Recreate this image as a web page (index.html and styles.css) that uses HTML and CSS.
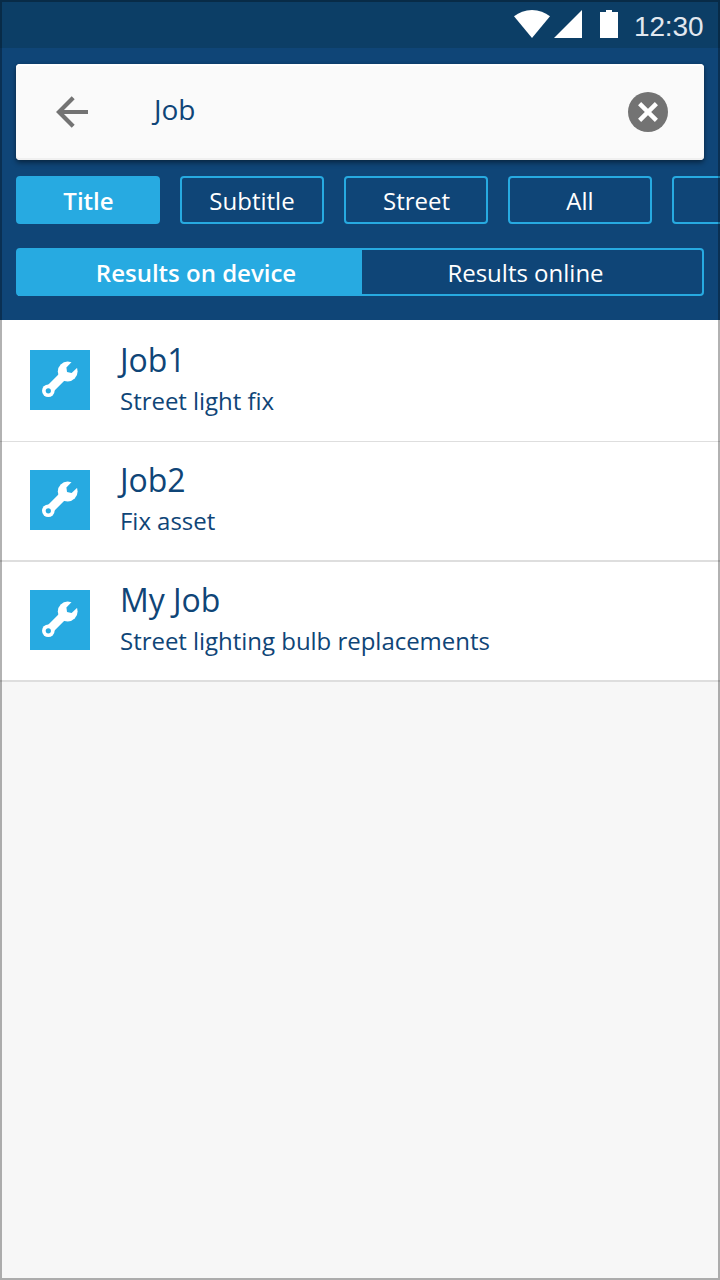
FILE: index.html
```html
<!DOCTYPE html>
<html lang="en">
<head>
<meta charset="utf-8">
<title>Job search</title>
<link rel="stylesheet" href="styles.css">
</head>
<body>
<svg class="defs" aria-hidden="true">
  <symbol id="wrench" viewBox="0 0 60 60">
    <path d="M20.5 38.5L34 25" stroke="#fff" stroke-width="8.6"/>
    <circle cx="37.7" cy="21.5" r="9.9" fill="#fff"/>
    <circle cx="18.3" cy="40.8" r="6.3" fill="#fff"/>
    <circle cx="18.3" cy="40.8" r="2.6" fill="#27aae1"/>
    <path d="M42.6 11L36.4 17.6L37 22L41.6 23L48.8 16.2Z" fill="#27aae1"/>
  </symbol>
</svg>
<div class="screen">
  <header class="header">
    <div class="status">
      <svg class="status-icons" viewBox="0 0 106 28">
        <path d="M0 6.3C5 2.3 11 0 18 0s13 2.3 18 6.3L18 28z"/>
        <path d="M40 28L68 0v28z"/>
        <path d="M86 2h6V0h6v2h6v26H86z"/>
      </svg>
      <span class="clock">12:30</span>
    </div>
    <div class="search">
      <svg class="icon" viewBox="0 0 24 24"><path class="arrow" d="M20 12H6M12.6 4.9L5.5 12l7.1 7.1"/></svg>
      <span class="query">Job</span>
      <svg class="icon" viewBox="0 0 24 24"><circle cx="12" cy="12" r="10"/><path class="cross" d="M7.8 7.8l8.4 8.4M16.2 7.8l-8.4 8.4"/></svg>
    </div>
    <nav class="chips">
      <span class="chip chip-active">Title</span>
      <span class="chip">Subtitle</span>
      <span class="chip chip-street">Street</span>
      <span class="chip">All</span>
      <span class="chip"></span>
    </nav>
    <div class="segments">
      <span class="segment segment-active">Results on device</span>
      <span class="segment">Results online</span>
    </div>
  </header>
  <main class="list">
    <article class="row row-first">
      <svg class="tile"><use href="#wrench"/></svg>
      <div class="info"><h2 class="name">Job1</h2><p class="detail">Street light fix</p></div>
    </article>
    <article class="row">
      <svg class="tile"><use href="#wrench"/></svg>
      <div class="info"><h2 class="name">Job2</h2><p class="detail">Fix asset</p></div>
    </article>
    <article class="row">
      <svg class="tile"><use href="#wrench"/></svg>
      <div class="info"><h2 class="name">My Job</h2><p class="detail">Street lighting bulb replacements</p></div>
    </article>
  </main>
</div>
</body>
</html>
```
FILE: styles.css
```css
* { box-sizing: border-box; }
body { margin: 0; font-family: "Open Sans", "Noto Sans", sans-serif; color: #0f4577; }
.defs { position: absolute; width: 0; height: 0; }
.screen { position: relative; width: 720px; height: 1280px; overflow: hidden; background: #f7f7f7; }
.screen::after { content: ""; position: absolute; inset: 0; border: 2px solid rgba(0, 0, 0, .3); pointer-events: none; }
.header { height: 320px; background: #0f4577; }
.status { height: 48px; padding: 0 16px 0 0; display: flex; justify-content: flex-end; gap: 14px; background: #0c3e66; }
.status-icons { width: 106px; height: 28px; margin-top: 10px; fill: #fff; }
.clock { width: 70px; font: 28px/32px "Liberation Sans", Arial, sans-serif; letter-spacing: -.15px; color: #e2e8ef; margin-top: 11px; }
.search { display: flex; align-items: center; height: 96px; margin: 16px 16px 0; padding: 0 32px; border-radius: 4px; background: #fafafa; box-shadow: 0 3px 5px rgba(0, 0, 0, .4), 0 0 3px rgba(0, 0, 0, .12), inset 0 2px #fff, inset 0 -2px #f0f0f0; }
.icon { width: 48px; height: 48px; fill: #737373; }
.arrow { fill: none; stroke: #737373; stroke-width: 2.1; }
.cross { stroke: #fff; stroke-width: 2.2; }
.query { flex: 1; margin-left: 58px; font-size: 28px; line-height: 38px; margin-top: -6px; }
.chips { display: flex; gap: 20px; margin: 16px 0 0 16px; overflow: hidden; }
.chip { flex: none; width: 144px; height: 48px; border: 2px solid #27aae1; border-radius: 4px; color: #fff; font-size: 24px; line-height: 46px; text-align: center; }
.chip-active { background: #27aae1; font-weight: 600; padding-left: 1px; }
.chip-street { padding-left: 1px; }
.segments { display: grid; grid-template-columns: 344px 1fr; height: 48px; margin: 24px 16px 0; border: 2px solid #27aae1; border-radius: 4px; }
.segment { color: #fff; font-size: 24px; line-height: 46px; text-align: center; padding-right: 13px; }
.segment-active { background: #27aae1; font-weight: 600; padding: 0 0 0 12px; }
.row { display: flex; gap: 30px; height: 120px; padding: 28px 30px 0; background: #fff; border-bottom: 2px solid #dedede; }
.row-first { height: 122px; padding-top: 30px; border-bottom-width: 1px; }
.tile { width: 60px; height: 60px; background: #27aae1; }
.info { margin-top: -10px; }
.name { margin: 0 0 1px; font-size: 32px; font-weight: 400; line-height: 40px; letter-spacing: -.05px; }
.detail { margin: 0; font-size: 24px; line-height: 40px; letter-spacing: -.03px; }
```
